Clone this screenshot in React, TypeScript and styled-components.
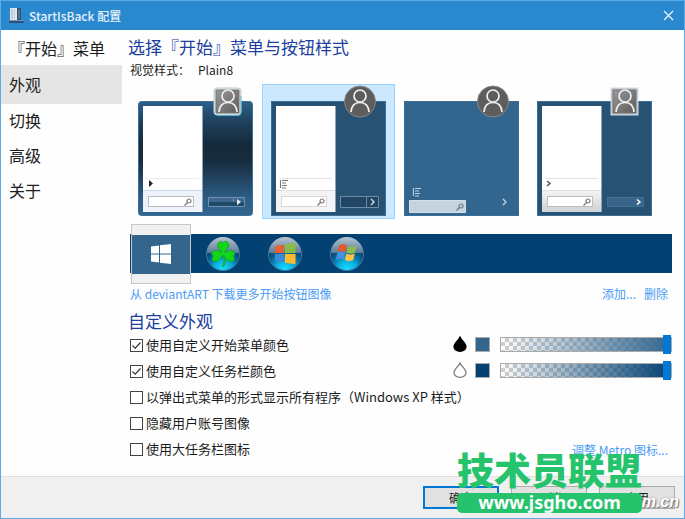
import React, { useState } from "react";
import styled, { createGlobalStyle, css } from "styled-components";

const GlobalStyle = createGlobalStyle`
  * { box-sizing: border-box; }
  body {
    margin: 0;
    background: #fefefe;
    color: #1c1c1c;
    font-family: "Noto Sans CJK SC", "Noto Sans", sans-serif;
    font-size: 13px;
  }
  button, input { font: inherit; color: inherit; }
  button { cursor: pointer; }
`;

const Window = styled.div`
  position: relative;
  display: flex;
  flex-direction: column;
  min-height: 100vh;
  border: 1px solid #5aace9;
  background: #fefefe;
`;

const TitleBar = styled.header`
  display: flex;
  align-items: center;
  gap: 4px;
  height: 29px;
  padding: 0 8px;
  background: #2a88cf;
  color: #e4f2fc;
`;

const WindowTitle = styled.h1`
  flex: 1;
  margin: 0;
  font-size: 12px;
  font-weight: 500;
  line-height: 18px;
`;

const CloseButton = styled.button`
  display: flex;
  padding: 2px;
  border: 0;
  background: none;
`;

const Body = styled.div`
  flex: 1;
  display: flex;
`;

const Sidebar = styled.nav`
  flex: 0 0 121px;
  padding-top: 2px;
`;

const NavItem = styled.button<{ $active?: boolean }>`
  display: block;
  width: 100%;
  height: 33px;
  margin: 0 0 2px;
  padding: 0 8px 2px;
  border: 0;
  background: none;
  font-size: 16px;
  line-height: 24px;
  text-align: left;
  white-space: nowrap;
  ${(p) =>
    p.$active &&
    css`
      height: 39px;
      margin: -2px 0 0;
      background: #e5e5e5;
    `}
`;

const Content = styled.main`
  flex: 1;
  min-width: 0;
  padding: 5px 12px 14px 6px;
`;

const Heading = styled.h2`
  margin: 0;
  color: #1a3f9e;
  font-size: 17px;
  font-weight: 400;
  line-height: 23px;
`;

const StyleName = styled.p`
  display: flex;
  gap: 8px;
  margin: 3px 2px 5px;
  font-size: 12px;
  line-height: 18px;
`;

const Gallery = styled.div`
  display: flex;
  margin: 0 1px;
`;

const StyleTile = styled.button<{ $selected: boolean }>`
  display: flex;
  flex: 0 0 133px;
  height: 135px;
  padding: 0;
  border: 1px solid ${(p) => (p.$selected ? "#99d1ff" : "transparent")};
  background: ${(p) => (p.$selected ? "#cce8ff" : "transparent")};
`;

const Taskbar = styled.div`
  display: flex;
  align-items: center;
  gap: 2px;
  height: 39px;
  margin: 15px 0 12px 2px;
  padding-left: 1px;
  background: #034173;
`;

const OrbButton = styled.button<{ $selected: boolean }>`
  display: flex;
  align-items: center;
  justify-content: center;
  width: 60px;
  height: 60px;
  padding: 0;
  border: 1px solid ${(p) => (p.$selected ? "#c4c8cb" : "transparent")};
  background: ${(p) =>
    p.$selected
      ? "linear-gradient(#f1f1f1 10px, #34658d 10px, #34658d 49px, #f1f1f1 49px)"
      : "none"};
`;

const LinkRow = styled.div`
  display: flex;
  gap: 8px;
  margin: 0 4px 6px 2px;
  line-height: 18px;
`;

const Link = styled.a<{ $push?: boolean }>`
  margin-right: ${(p) => (p.$push ? "auto" : "0")};
  color: #4a9bf5;
  font-size: 12px;
  text-decoration: none;
  white-space: nowrap;
`;

const OptionRow = styled.div<{ $inset?: boolean }>`
  display: flex;
  align-items: center;
  justify-content: space-between;
  height: 26px;
  padding: 0 ${(p) => (p.$inset ? "4px" : "0")} 0 2px;
`;

const OptionLabel = styled.label`
  display: flex;
  align-items: center;
  gap: 3px;
  line-height: 18px;
  white-space: nowrap;
`;

const Tick = styled.input`
  appearance: none;
  width: 13px;
  height: 13px;
  margin: 0;
  border: 1px solid #444;
  background: #fff;
  &:checked {
    background: #fff
      url("data:image/svg+xml,%3Csvg xmlns='http://www.w3.org/2000/svg' viewBox='0 0 11 11'%3E%3Cpath d='M1.5 5.5 4.2 8.2 9.5 2.5' fill='none' stroke='%23333' stroke-width='1.2'/%3E%3C/svg%3E");
  }
`;

const ColorTools = styled.div`
  display: flex;
  align-items: center;
  padding-bottom: 2px;
`;

const Swatch = styled.button<{ $color: string }>`
  width: 15px;
  height: 15px;
  margin: 0 10px 0 8px;
  padding: 0;
  border: 1px solid #aaa;
  background: ${(p) => p.$color};
`;

const Opacity = styled.input<{ $color: string }>`
  appearance: none;
  width: 172px;
  height: 19px;
  margin: 0;
  background: none;
  &::-webkit-slider-runnable-track {
    height: 15px;
    border: 1px solid #aaa;
    background:
      linear-gradient(to right, transparent, ${(p) => p.$color}),
      repeating-conic-gradient(#d0d0d0 0 25%, #fff 0 50%) 0 0 / 8px 8px;
  }
  &::-webkit-slider-thumb {
    appearance: none;
    width: 8px;
    height: 19px;
    margin-top: -3px;
    background: #0078d7;
  }
`;

const Footer = styled.footer`
  display: flex;
  justify-content: flex-end;
  gap: 12px;
  padding: 9px;
  border-top: 1px solid #dfdfdf;
  background: #f0f0f0;
`;

const PushButton = styled.button<{ $primary?: boolean }>`
  width: 76px;
  height: 23px;
  padding: 0;
  border: ${(p) => (p.$primary ? "2px solid #0078d7" : "1px solid #adadad")};
  background: #e1e1e1;
  font-size: 12px;
  line-height: 18px;
`;

const Stamp = styled.div`
  position: absolute;
  right: 42px;
  bottom: 5px;
  width: 185px;
  color: #25c46c;
  pointer-events: none;
`;

const StampName = styled.div`
  margin-bottom: 4px;
  font-size: 37px;
  font-weight: 900;
  line-height: 40px;
  text-align: center;
  white-space: nowrap;
`;

const StampSite = styled.div`
  height: 20px;
  border-radius: 5px;
  background: #25c46c;
  color: #fff;
  font-family: "Noto Sans", sans-serif;
  font-size: 18px;
  font-weight: 700;
  line-height: 18px;
  text-align: center;
`;

const StampTail = styled.div`
  position: absolute;
  right: 5px;
  bottom: 6px;
  color: #fff;
  font: italic 700 16px/20px "Liberation Sans", sans-serif;
  text-shadow: 1px 1px 1px #777, 0 0 2px #999;
  pointer-events: none;
`;

const AppIcon = () => (
  <svg width="16" height="17" viewBox="0 0 16 17" aria-hidden="true">
    <path d="M1 1h7v12H1z" fill="#dfe9f1" />
    <path d="M2 2h2v10H2zM5 2h1v10H5z" fill="#bccbd8" />
    <path d="M8 1h4v12H8z" fill="#34506f" />
    <path d="M9 2h2v10H9z" fill="#50708f" />
    <path d="M0 13h15v3H0z" fill="#324f78" />
    <path d="M0 13h15v1H0z" fill="#7492b0" />
  </svg>
);

const Person = ({ x, y }: { x: number; y: number }) => (
  <g transform={`translate(${x} ${y})`} fill="none" stroke="#f0f0f0" strokeWidth="1.7">
    <circle cx="0" cy="-5" r="6" />
    <path d="M-9 11C-8.500 4.500-5 1.500 0 1.500S8.500 4.500 9 11" />
  </g>
);

const Magnifier = ({ x, y }: { x: number; y: number }) => (
  <g transform={`translate(${x} ${y})`} fill="none" stroke="#777" strokeWidth="1.2">
    <circle cx="1" cy="-1" r="2" />
    <path d="m-.5 .5-3 3" />
  </g>
);

const ListGlyph = ({ x, y, color }: { x: number; y: number; color: string }) => (
  <path
    transform={`translate(${x} ${y})`}
    d="M.5 0v8M2 .5h6M2 3h4M2 5.500h5M2 8h4"
    fill="none"
    stroke={color}
    strokeWidth="1.1"
  />
);

type PreviewKind = "glass" | "plain10" | "flat" | "plain8";

const MenuPreview = ({ kind }: { kind: PreviewKind }) => {
  const round = kind === "plain10" || kind === "flat";
  const avatarX = round ? 98 : kind === "glass" ? 99 : 97;
  const base = { glass: "url(#glassFill)", plain10: "#275273", flat: "#33668f", plain8: "#275273" }[kind];
  return (
    <svg width="131" height="133" viewBox="1 1 131 133" aria-hidden="true">
      <defs>
        <linearGradient id="glassFill" x1="0" y1="0" x2="0" y2="1">
          <stop offset="0" stopColor="#2d608b" />
          <stop offset=".2" stopColor="#1d3e59" />
          <stop offset=".38" stopColor="#162a3a" />
          <stop offset=".52" stopColor="#172c3e" />
          <stop offset=".85" stopColor="#2d5d86" />
          <stop offset="1" stopColor="#32658f" />
        </linearGradient>
        <linearGradient id="avatarFill" x1="0" y1="0" x2="1" y2="1">
          <stop offset="0" stopColor="#999" />
          <stop offset="1" stopColor="#5c5c5c" />
        </linearGradient>
        <linearGradient id="silverFill" x1="0" y1="0" x2="0" y2="1">
          <stop offset="0" stopColor="#f5f5f5" />
          <stop offset="1" stopColor="#cfd1d3" />
        </linearGradient>
      </defs>
      <rect x="9.500" y="17.500" width="114" height="114" rx={kind === "glass" ? 3 : 0} fill={base} stroke="#3c6f98" />
      {kind !== "flat" && (
        <>
          <path d="M14 22h59v106H14z" fill="#fff" />
          <path
            d="M14 106h59v22H14z"
            fill={kind === "glass" ? "#eef3fb" : kind === "plain8" ? "url(#silverFill)" : "#f3f3f3"}
          />
          <path d="M14 106.500h59" stroke={kind === "glass" ? "#ccd9ec" : "#ddd"} />
          <path d="M17 94.500h53" stroke={kind === "glass" ? "#e4edf8" : "#e3e3e3"} />
          <path d="M73.500 22v106" stroke="#8ba6bb" />
          <rect x="19.500" y="112.500" width="45" height="10" fill="#fff" stroke={kind === "plain10" ? "#d8d8d8" : "#b9bcc0"} />
          <Magnifier x={59} y={118} />
        </>
      )}
      {kind === "glass" && (
        <>
          <path d="m20 96 4 3.500-4 3.500z" fill="#222" />
          <path d="M79.500 113.500h36v9h-36zM104.500 113.500v9" fill="#3d678d" stroke="#6e91b0" />
          <path d="M80 118h35v4H80z" fill="#214969" />
          <path d="m108 115 4 3-4 3z" fill="#e8eef3" />
        </>
      )}
      {kind === "plain10" && (
        <>
          <ListGlyph x={18} y={96} color="#777" />
          <path d="M78.500 112.500h38v11h-38z" fill="#214564" stroke="#6d8da6" />
          <path d="M104.500 113v10" stroke="#6d8da6" />
          <path d="m109 115 3 3-3 3" fill="none" stroke="#d7e0e8" strokeWidth="1.3" />
        </>
      )}
      {kind === "flat" && (
        <>
          <ListGlyph x={18} y={104} color="#bfd0df" />
          <path d="M14.500 116.500h56v12h-56z" fill="#c3d3e0" stroke="#d4e0e9" />
          <Magnifier x={65} y={123} />
          <path d="m108 115 3 3-3 3" fill="none" stroke="#c5d4e1" strokeWidth="1.3" />
        </>
      )}
      {kind === "plain8" && (
        <>
          <path d="m19 97 3 2.500-3 2.500" fill="none" stroke="#555" strokeWidth="1.5" />
          <path d="M79.500 113.500h36v9h-36z" fill="#3a658b" stroke="#446f94" />
          <path d="m109 115.500 3 2.500-3 2.500" fill="none" stroke="#fff" strokeWidth="1.5" />
        </>
      )}
      {round ? (
        <circle cx={avatarX} cy="17.500" r="15.500" fill="#5d5d5d" stroke="#888" />
      ) : (
        <>
          <rect
            x={avatarX - 14}
            y="4"
            width="27"
            height="27"
            rx={kind === "glass" ? 3 : 0}
            fill={kind === "glass" ? "#e2e6e8" : "#b9c2ca"}
            stroke={kind === "glass" ? "#b9cdd3" : "#d5dade"}
          />
          {kind === "glass" && <path d="M88 31.500h21q3 0 3-3V12" fill="none" stroke="#56b3cc" />}
          <path d={`M${avatarX - 12} 6h23v23h-23z`} fill="url(#avatarFill)" stroke="#777" />
        </>
      )}
      <Person x={avatarX} y={17} />
    </svg>
  );
};

type OrbKind = "win10" | "clover" | "win8" | "win7";

const FlagColors = ({ wavy }: { wavy: boolean }) =>
  wavy ? (
    <g>
      <path d="M10 9.500c3-1.800 5.500-1.500 8-.1L16.600 16c-2.600-1.500-5-1.500-8-.1z" fill="#e5572c" />
      <path d="M19 10c3 1.500 5.300 1.500 8.500 0L26 16.500c-3 1.500-5.500 1.500-8.400 0z" fill="#8abf48" />
      <path d="M8.300 17c3-1.500 5.300-1.500 8 0L15 23.500c-2.800-1.500-5-1.500-8.200 0z" fill="#4792df" />
      <path d="M17.300 17.600c3 1.500 5.300 1.500 8.400 0L24.200 24c-3 1.500-5.500 1.500-8.300 0z" fill="#fec343" />
    </g>
  ) : (
    <g>
      <path d="m8 10 9-1.500V17H8z" fill="#e46335" />
      <path d="m18 8.300 10.500-1.600V17H18z" fill="#89bb49" />
      <path d="M8 18h9v8.500L8 25z" fill="#3d8bd8" />
      <path d="M18 18h10.500v10.300L18 26.700z" fill="#fdb92e" />
    </g>
  );

const Orb = ({ kind }: { kind: OrbKind }) => {
  if (kind === "win10") {
    return (
      <svg width="20" height="20" viewBox="0 0 20 20" fill="#fff" aria-hidden="true">
        <path d="m0 2.500 8-1.100v8.100H0zM9 1.300 20 0v9.500H9zM0 10.500h8v8.100l-8-1.100zM9 10.500h11V20L9 18.700z" />
      </svg>
    );
  }
  return (
    <svg width="36" height="36" viewBox="0 0 36 36" aria-hidden="true">
      <defs>
        <radialGradient id="orbFill" cx=".5" cy=".95" r=".75">
          <stop offset="0" stopColor="#18dcff" />
          <stop offset=".35" stopColor="#0aaee0" />
          <stop offset=".75" stopColor="#075481" />
          <stop offset="1" stopColor="#06385e" />
        </radialGradient>
        <linearGradient id="orbShine" x1="0" y1="0" x2="0" y2="1">
          <stop offset="0" stopColor="#b6c5d2" />
          <stop offset="1" stopColor="#5a7b99" />
        </linearGradient>
      </defs>
      <circle cx="18" cy="18" r="16.500" fill="url(#orbFill)" stroke="#3f789f" />
      <path d="M2 17a16 16 0 0 1 32 0z" fill="url(#orbShine)" />
      {kind === "clover" ? (
        <g fill="#12d51c" stroke="#08a51d" strokeWidth=".8">
          <path d="M18 18q3 7 0 13" fill="none" stroke="#0cb82a" strokeWidth="2.200" />
          <path d="M18 17c-5-4-6.500-8-4.500-10.500 2-2 4-1 4.500.5.500-1.500 3-2.500 5-.5 2 2.500 0 6.500-5 10.500z" />
          <path d="M18 18c-4-4-8.500-4.500-10.500-2-1.500 2-.5 3.500 1 4-1.500 1-2 3.500 0 5C12 27 16 23 18 18z" />
          <path d="M18 18c4-4 9-4.500 11-2 1.500 2 .5 3.500-1 4 1.500 1 2 3.500 0 5C24.500 27 20 23 18 18z" />
          <circle cx="18" cy="17.500" r="2" stroke="none" />
        </g>
      ) : (
        <FlagColors wavy={kind === "win7"} />
      )}
    </svg>
  );
};

const Drop = ({ filled }: { filled: boolean }) => (
  <svg width="14" height="16" viewBox="0 0 14 16" aria-hidden="true">
    <path
      d="M7 1C5.500 4.500 1 7.500 1 10.700A6 4.600 0 0 0 13 10.700C13 7.500 8.500 4.500 7 1z"
      fill={filled ? "#000" : "#fff"}
      stroke={filled ? "#000" : "#777"}
      strokeWidth="1.2"
    />
  </svg>
);

const pages = ["『开始』菜单", "外观", "切换", "高级", "关于"];
const previews: { kind: PreviewKind; name: string }[] = [
  { kind: "glass", name: "Aero" },
  { kind: "plain10", name: "Plain8" },
  { kind: "flat", name: "Flat" },
  { kind: "plain8", name: "Plain" },
];
const orbs: OrbKind[] = ["win10", "clover", "win8", "win7"];
const options = [
  { label: "使用自定义开始菜单颜色", on: true, color: "#33668f", filled: true },
  { label: "使用自定义任务栏颜色", on: true, color: "#034173", filled: false },
  { label: "以弹出式菜单的形式显示所有程序（Windows XP 样式）", on: false },
  { label: "隐藏用户账号图像", on: false },
  { label: "使用大任务栏图标", on: false, link: "调整 Metro 图标..." },
];

export default function App() {
  const [page, setPage] = useState(1);
  const [style, setStyle] = useState<PreviewKind>("plain10");
  const [orb, setOrb] = useState<OrbKind>("win10");

  return (
    <>
      <GlobalStyle />
      <Window>
        <TitleBar>
          <AppIcon />
          <WindowTitle>StartIsBack 配置</WindowTitle>
          <CloseButton aria-label="关闭">
            <svg width="11" height="11" viewBox="0 0 11 11" aria-hidden="true">
              <path d="m1 1 9 9M10 1l-9 9" stroke="#e9f4fc" strokeWidth="1.3" />
            </svg>
          </CloseButton>
        </TitleBar>
        <Body>
          <Sidebar>
            {pages.map((name, i) => (
              <NavItem key={name} $active={i === page} onClick={() => setPage(i)}>
                {name}
              </NavItem>
            ))}
          </Sidebar>
          <Content>
            <Heading>选择『开始』菜单与按钮样式</Heading>
            <StyleName>
              <span>视觉样式：</span>
              <span>Plain8</span>
            </StyleName>
            <Gallery>
              {previews.map(({ kind, name }) => (
                <StyleTile
                  key={kind}
                  aria-label={name}
                  aria-pressed={style === kind}
                  $selected={style === kind}
                  onClick={() => setStyle(kind)}
                >
                  <MenuPreview kind={kind} />
                </StyleTile>
              ))}
            </Gallery>
            <Taskbar>
              {orbs.map((kind) => (
                <OrbButton
                  key={kind}
                  aria-label={kind}
                  aria-pressed={orb === kind}
                  $selected={orb === kind}
                  onClick={() => setOrb(kind)}
                >
                  <Orb kind={kind} />
                </OrbButton>
              ))}
            </Taskbar>
            <LinkRow>
              <Link href="#more" $push>从 deviantART 下载更多开始按钮图像</Link>
              <Link href="#add">添加...</Link>
              <Link href="#remove">删除</Link>
            </LinkRow>
            <Heading>自定义外观</Heading>
            {options.map(({ label, on, color, filled, link }) => (
              <OptionRow key={label} $inset={!!link}>
                <OptionLabel>
                  <Tick type="checkbox" defaultChecked={on} />
                  {label}
                </OptionLabel>
                {color && (
                  <ColorTools>
                    <Drop filled={!!filled} />
                    <Swatch $color={color} aria-label="选择颜色" />
                    <Opacity
                      $color={color}
                      type="range"
                      min="0"
                      max="100"
                      defaultValue="100"
                      aria-label="不透明度"
                    />
                  </ColorTools>
                )}
                {link && <Link href="#metro">{link}</Link>}
              </OptionRow>
            ))}
          </Content>
        </Body>
        <Footer>
          <PushButton $primary>确定</PushButton>
          <PushButton>取消</PushButton>
          <PushButton>应用</PushButton>
        </Footer>
        <StampTail>m.cn</StampTail>
        <Stamp>
          <StampName>技术员联盟</StampName>
          <StampSite>www.jsgho.com</StampSite>
        </Stamp>
      </Window>
    </>
  );
}
